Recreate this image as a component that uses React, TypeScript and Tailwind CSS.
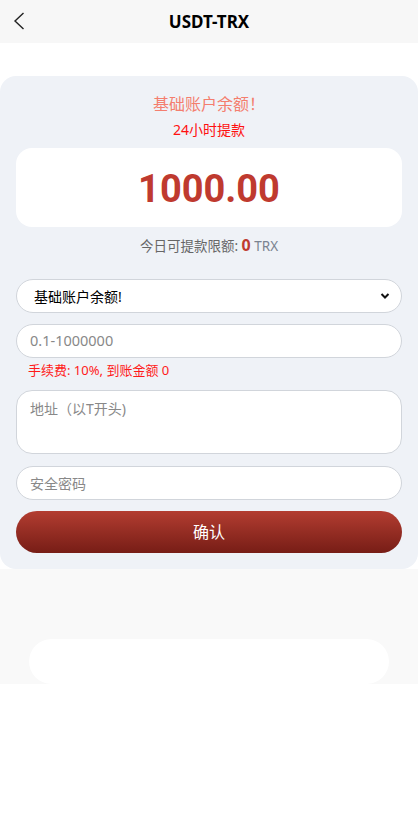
import React from "react";

export default function App() {
  const font = { fontFamily: '"Noto Sans", "Noto Sans CJK SC", sans-serif' };
  return (
    <div className="w-[418px] min-h-[829px] bg-white" style={font}>
      {/* header */}
      <div className="h-[43px] bg-[#f7f7f7] flex items-center relative">
        <svg className="absolute left-[13px] top-[12px]" width="12" height="18" viewBox="0 0 12 18" fill="none">
          <path d="M10.5 1 L2 9 L10.5 17" stroke="#222" strokeWidth="1.4" />
        </svg>
        <div className="w-full text-center text-[17px] font-bold text-black">USDT-TRX</div>
      </div>
      <div className="h-[33px]" />
      {/* card */}
      <div className="bg-[#eff2f7] rounded-[16px] px-4 pt-[15px] pb-4 flex flex-col">
        <div className="text-center text-[16px] leading-6 text-[#f47e6e]" style={{ fontFamily: '"Noto Sans CJK SC", sans-serif' }}>基础账户余额！</div>
        <div className="mt-[5px] text-center text-[14px] leading-5 text-[#ff1010]">24小时提款</div>
        <div className="mt-2 h-[79px] bg-white rounded-[16px] flex items-center justify-center">
          <span className="text-[38px] leading-none font-bold text-[#bf3a2f] pt-[2px]" style={{ fontFamily: 'Roboto, "Noto Sans", sans-serif' }}>1000.00</span>
        </div>
        <div className="mt-2 h-5 text-center text-[13.5px] leading-5 text-[#666]">
          今日可提款限额: <span className="font-bold text-[#bf3a2f] text-[16px] leading-5">0</span> <span className="text-[#7a8390]">TRX</span>
        </div>
        <div className="mt-6 h-[34px] rounded-full border border-[#d1d5db] bg-white flex items-center justify-between pl-[17px] pr-[11px]">
          <span className="text-[14px] text-black">基础账户余额!</span>
          <svg width="10" height="8" viewBox="0 0 10 8"><path d="M1.5 2 L5 5.5 L8.5 2" stroke="#111" strokeWidth="2" fill="none" /></svg>
        </div>
        <div className="mt-[11px] h-[34px] rounded-full border border-[#d1d5db] bg-white flex items-center px-[13px]">
          <span className="text-[14.5px] text-[#888]">0.1-1000000</span>
        </div>
        <div className="mt-[2px] pl-3 text-[13px] leading-5 text-[#ff1a1a]">手续费: 10%, 到账金额 0</div>
        <div className="mt-[10px] h-[64px] rounded-[16px] border border-[#d1d5db] bg-white px-[13px] pt-[5px]">
          <span className="text-[14px] text-[#888]">地址（以T开头)</span>
        </div>
        <div className="mt-3 h-[34px] rounded-full border border-[#d1d5db] bg-white flex items-center px-[13px]">
          <span className="text-[14px] text-[#888]">安全密码</span>
        </div>
        <div className="mt-[11px] h-[42px] rounded-full bg-gradient-to-b from-[#b33d31] to-[#771d16] flex items-center justify-center">
          <span className="text-white text-[16px]">确认</span>
        </div>
      </div>
      {/* bottom */}
      <div className="bg-[#f9f9f9] h-[115px] pt-[70px] px-[29px]">
        <div className="h-[45px] bg-white rounded-full" />
      </div>
    </div>
  );
}
